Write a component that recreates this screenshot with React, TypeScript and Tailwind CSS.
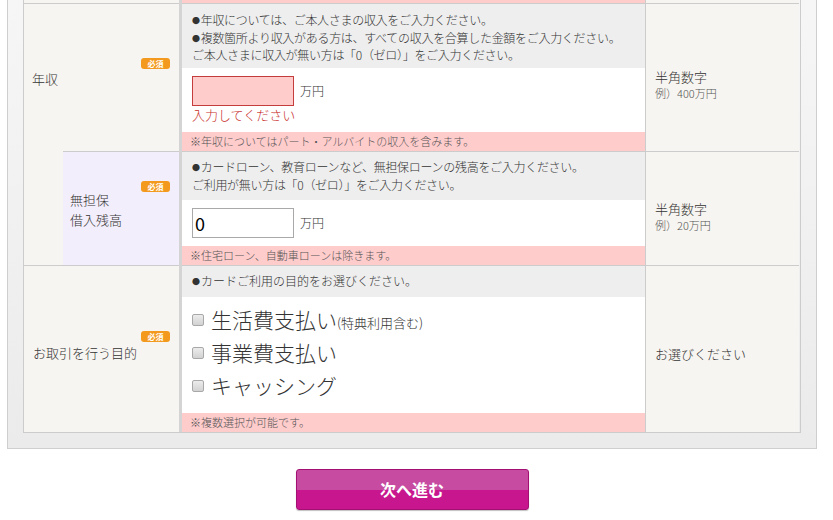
const Badge = ({ className }: { className: string }) => (
  <span
    className={`absolute right-[9px] flex h-[11px] w-[29px] items-center justify-center rounded-[3px] bg-[#f39a1e] text-[8px] font-bold leading-none text-white ${className}`}
  >
    必須
  </span>
);

const Sep = () => <div className="w-[3px] shrink-0 bg-[#d4d4d4]" />;

const Hint = ({ main, sub, className }: { main: string; sub?: string; className: string }) => (
  <div
    className={`flex w-[154px] shrink-0 flex-col justify-center border-t border-l border-[#cccccc] bg-[#f7f5f1] pl-[9px] ${className}`}
  >
    <p className="text-[13px] leading-[17px] text-[#333]">{main}</p>
    {sub && <p className="text-[11px] leading-[16px] text-[#555]">{sub}</p>}
  </div>
);

const Dot = () => <span className="mr-[1px] inline-block text-[8px] align-[1px]">●</span>;

const Note = ({ children }: { children: string }) => (
  <div className="h-[19px] bg-[#ffcccc] pl-[8px] text-[11px] leading-[19px] text-[#555]">{children}</div>
);

const Purpose = ({ label, extra }: { label: string; extra?: string }) => (
  <label className="flex h-[33px] items-center gap-[7px]">
    <input
      type="checkbox"
      className="h-[12px] w-[12px] appearance-none rounded-[2px] border border-[#a8a8a8] bg-gradient-to-b from-[#ececec] to-[#d2d2d2]"
    />
    <span className="text-[21px] leading-none text-[#333]">
      {label}
      {extra && <span className="text-[13px]">{extra}</span>}
    </span>
  </label>
);

export default function App() {
  return (
    <div className="min-h-[520px] w-[833px] overflow-hidden bg-white font-['Noto_Sans_CJK_JP','Noto_Sans',sans-serif] font-light text-[#333]">
      {/* Outer panel */}
      <div className="ml-[7px] w-[810px] border-x border-b border-[#cfcfcf] bg-gradient-to-b from-[#f6f6f6] to-[#ebebeb] px-[15px] pb-[15px]">
        <div className="w-[778px] border-x border-b border-[#cccccc]">
          {/* tail of the previous row */}
          <div className="flex h-[3px]">
            <div className="w-[155px] bg-[#f7f5f1]" />
            <Sep />
            <div className="w-[463px] bg-[#ffcccc]" />
            <div className="w-[154px] border-l border-[#cccccc] bg-[#f7f5f1]" />
          </div>

          {/* 年収 */}
          <div className="flex">
            <div className="relative flex w-[155px] shrink-0 items-center border-t border-[#cccccc] bg-[#f7f5f1] pl-[8px] pt-[3px] text-[13px]">
              <Badge className="top-[54px]" />
              年収
            </div>
            <Sep />
            <div className="w-[463px] shrink-0 border-t border-[#cccccc]">
              <div className="h-[64px] bg-[#eeeeee] pl-[10px] pt-[8px] text-[12px] leading-[16.5px] tracking-[-0.3px]">
                <p><Dot />年収については、ご本人さまの収入をご入力ください。</p>
                <p><Dot />複数箇所より収入がある方は、すべての収入を合算した金額をご入力ください。</p>
                <p>ご本人さまに収入が無い方は「0（ゼロ）」をご入力ください。</p>
              </div>
              <div className="h-[64px] bg-white pl-[10px] pt-[8px]">
                <div className="flex items-center gap-[6px]">
                  <input className="h-[30px] w-[102px] border border-[#c43c3c] bg-[#ffcccc] outline-none" />
                  <span className="text-[12px]">万円</span>
                </div>
                <p className="text-[13px] leading-[18px] text-[#c8302c]">入力してください</p>
              </div>
              <Note>※年収についてはパート・アルバイトの収入を含みます。</Note>
            </div>
            <Hint main="半角数字" sub="例）400万円" className="pt-[14px]" />
          </div>

          {/* 無担保借入残高 */}
          <div className="flex">
            <div className="flex w-[155px] shrink-0 bg-[#f7f5f1]">
              <div className="w-[39px] shrink-0" />
              <div className="relative flex flex-1 items-center border-t border-[#cccccc] bg-[#f3eefb] pl-[7px] pt-[2px] text-[13px] leading-[20px]">
                <Badge className="top-[29px]" />
                <p>
                  無担保
                  <br />
                  借入残高
                </p>
              </div>
            </div>
            <Sep />
            <div className="w-[463px] shrink-0 border-t border-[#cccccc]">
              <div className="h-[48px] bg-[#eeeeee] pl-[10px] pt-[7px] text-[12px] leading-[16.5px] tracking-[-0.3px]">
                <p><Dot />カードローン、教育ローンなど、無担保ローンの残高をご入力ください。</p>
                <p>ご利用が無い方は「0（ゼロ）」をご入力ください。</p>
              </div>
              <div className="h-[46px] bg-white pl-[10px] pt-[8px]">
                <div className="flex items-center gap-[6px]">
                  <input
                    defaultValue="0"
                    className="h-[30px] w-[102px] border border-[#a9a9a9] bg-white px-[2px] text-[18px] font-normal text-black outline-none"
                  />
                  <span className="text-[12px]">万円</span>
                </div>
              </div>
              <Note>※住宅ローン、自動車ローンは除きます。</Note>
            </div>
            <Hint main="半角数字" sub="例）20万円" className="pt-[16px]" />
          </div>

          {/* お取引を行う目的 */}
          <div className="flex">
            <div className="relative flex w-[155px] shrink-0 items-center border-t border-[#cccccc] bg-[#f7f5f1] pl-[9px] pt-[7px] text-[13px]">
              <Badge className="top-[65px]" />
              お取引を行う目的
            </div>
            <Sep />
            <div className="w-[463px] shrink-0 border-t border-[#cccccc]">
              <div className="h-[31px] bg-[#eeeeee] pl-[10px] pt-[7px] text-[12px] leading-[16.5px]">
                <p><Dot />カードご利用の目的をお選びください。</p>
              </div>
              <div className="h-[116px] bg-white pl-[10px] pt-[6px]">
                <Purpose label="生活費支払い" extra="(特典利用含む)" />
                <Purpose label="事業費支払い" />
                <Purpose label="キャッシング" />
              </div>
              <Note>※複数選択が可能です。</Note>
            </div>
            <Hint main="お選びください" className="pt-[8px]" />
          </div>
        </div>
      </div>

      {/* Next button */}
      <div className="ml-[7px] flex w-[810px] justify-center pt-[20px]">
        <button className="h-[41px] w-[233px] rounded-[3px] border border-[#a30f72] bg-[linear-gradient(to_bottom,#c64ba1_0%,#c64ba1_50%,#c8168f_50%,#c8168f_100%)] pb-[2px] text-[16px] font-bold text-white shadow-[0_1px_1px_rgba(0,0,0,0.25)]">
          次へ進む
        </button>
      </div>
    </div>
  );
}
